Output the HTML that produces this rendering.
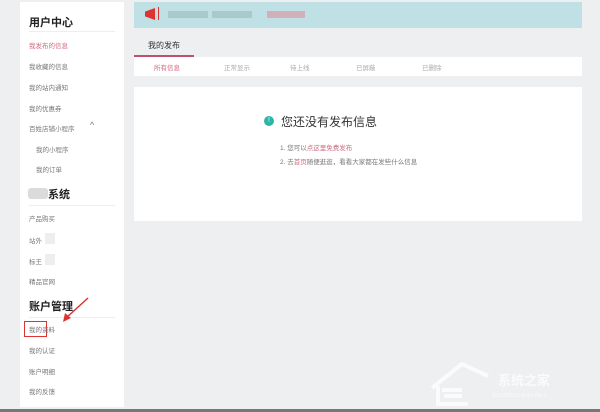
<!DOCTYPE html>
<html><head><meta charset="utf-8"><style>
*{margin:0;padding:0;box-sizing:border-box}
body{width:600px;height:412px;background:#eeeff1;font-family:"Liberation Sans","Noto Sans CJK SC",sans-serif;position:relative;overflow:hidden;color:#666}
.a{position:absolute;white-space:nowrap}
.side{position:absolute;left:20px;top:2px;width:104px;height:405px;background:#fff}
.h{font-size:11px;color:#222;font-weight:bold}
.i{font-size:6.5px;color:#777}
.line{position:absolute;height:1px;background:#eee}
</style></head><body>
<div class="side">
<div class="a h" style="left:9px;top:12px">用户中心</div>
<div class="line" style="left:9px;top:29px;width:86px"></div>
<div class="a i" style="left:9px;top:38px;color:#d06a80">我发布的信息</div>
<div class="a i" style="left:9px;top:59px">我收藏的信息</div>
<div class="a i" style="left:9px;top:80px">我的站内通知</div>
<div class="a i" style="left:9px;top:101px">我的优惠券</div>
<div class="a i" style="left:9px;top:121px">百姓店铺小程序</div>
<div class="a" style="left:70px;top:118px;font-size:9px;color:#777">^</div>
<div class="a i" style="left:16px;top:142px">我的小程序</div>
<div class="a i" style="left:16px;top:162px">我的订单</div>
<div class="a" style="left:8px;top:186px;width:20px;height:11px;background:#ccc;border-radius:3px;opacity:.7"></div>
<div class="a h" style="left:28px;top:184px">系统</div>
<div class="line" style="left:9px;top:203px;width:86px"></div>
<div class="a i" style="left:9px;top:211px">产品购买</div>
<div class="a i" style="left:9px;top:233px">站外</div>
<div class="a" style="left:25px;top:231px;width:10px;height:11px;background:#eee"></div>
<div class="a i" style="left:9px;top:254px">标王</div>
<div class="a" style="left:25px;top:252px;width:10px;height:11px;background:#eee"></div>
<div class="a i" style="left:9px;top:274px">精品官网</div>
<div class="a h" style="left:9px;top:296px">账户管理</div>
<div class="line" style="left:9px;top:315px;width:86px"></div>
<div class="a" style="left:4px;top:319px;width:23px;height:16px;border:1px solid #d33"></div>
<div class="a i" style="left:9px;top:322px">我的资料</div>
<div class="a i" style="left:9px;top:343px">我的认证</div>
<div class="a i" style="left:9px;top:364px">账户明细</div>
<div class="a i" style="left:9px;top:384px">我的反馈</div>
</div>
<svg class="a" style="left:60px;top:296px" width="32" height="28"><line x1="28" y1="2" x2="6" y2="22" stroke="#d33" stroke-width="1.5"/><polygon points="3,26 5,17 11,22" fill="#d33"/></svg>
<div class="a" style="left:134px;top:2px;width:448px;height:26px;background:#bfe0e4"></div>
<div class="a" style="left:145px;top:8px;width:10px;height:12px;background:#d33;clip-path:polygon(0 30%,100% 0,100% 100%,0 70%)"></div>
<div class="a" style="left:158px;top:7px;width:1px;height:13px;background:#d33"></div>
<div class="a" style="left:168px;top:11px;width:40px;height:7px;background:#9cb9bd;opacity:.6"></div>
<div class="a" style="left:212px;top:11px;width:40px;height:7px;background:#9cb9bd;opacity:.6"></div>
<div class="a" style="left:267px;top:11px;width:38px;height:7px;background:#dc9aa6;opacity:.7"></div>
<div class="a" style="left:148px;top:40px;font-size:8px;color:#333">我的发布</div>
<div class="a" style="left:134px;top:55px;width:60px;height:2px;background:#c0506b"></div>
<div class="a" style="left:134px;top:57px;width:448px;height:19px;background:#fff"></div>
<div class="a i" style="left:154px;top:62px;color:#d06a80">所有信息</div>
<div class="a i" style="left:224px;top:62px;color:#aaa">正常显示</div>
<div class="a i" style="left:290px;top:62px;color:#aaa">待上线</div>
<div class="a i" style="left:356px;top:62px;color:#aaa">已屏蔽</div>
<div class="a i" style="left:422px;top:62px;color:#aaa">已删除</div>
<div class="a" style="left:134px;top:87px;width:448px;height:134px;background:#fff"></div>
<div class="a" style="left:264px;top:116px;width:10px;height:10px;border-radius:50%;background:#2bb5a9;color:#fff;font-size:7px;text-align:center;line-height:10px">!</div>
<div class="a" style="left:281px;top:113px;font-size:12px;color:#333">您还没有发布信息</div>
<div class="a" style="left:280px;top:142px;font-size:6.5px;color:#777">1. 您可以<span style="color:#d06a80">点这里免费发布</span></div>
<div class="a" style="left:280px;top:156px;font-size:6.5px;color:#777">2. 去<span style="color:#d06a80">首页</span>随便逛逛，看看大家都在发些什么信息</div>
<div class="a" style="left:498px;top:370px;font-size:13px;color:#fff;opacity:.75;font-weight:bold">系统之家</div>
<div class="a" style="left:492px;top:393px;font-size:6px;color:#fff;opacity:.7">XITONGZHIJIA.NET</div>
<svg class="a" style="left:428px;top:360px" width="66" height="46" opacity=".75"><path d="M4 28 L34 4 L60 16 M10 26 V44 H40 M14 30 H34 M16 36 H34" fill="none" stroke="#fff" stroke-width="4"/></svg>
<div class="a" style="left:0;top:409px;width:600px;height:3px;background:#777"></div>
</body></html>
